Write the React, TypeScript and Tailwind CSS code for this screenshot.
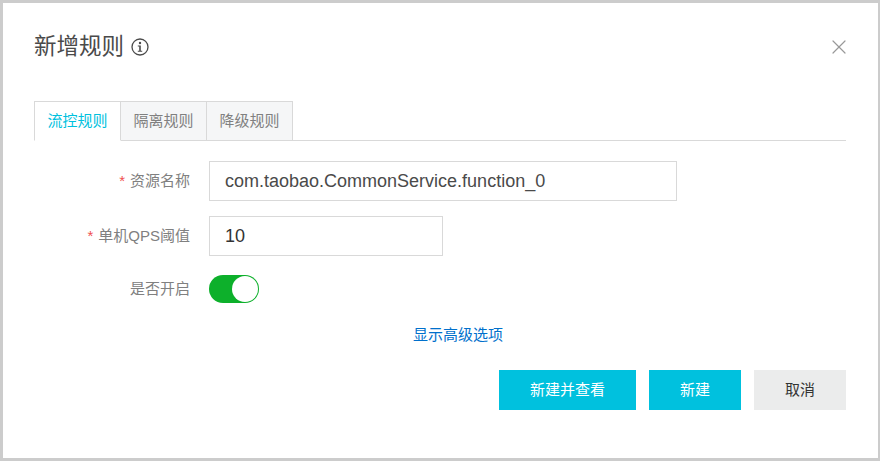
import { X } from 'lucide-react';

const font = "font-['Liberation_Sans','Noto_Sans_CJK_SC',sans-serif]";

const tabs = ['流控规则', '隔离规则', '降级规则'];

function Label({ text, required }: { text: string; required?: boolean }) {
  return (
    <div className="flex w-[156px] items-center justify-end text-[15px] text-[#808080]">
      {required && <span className="mr-[5px] text-[15px] text-[#f04f4f]">*</span>}
      {text}
    </div>
  );
}

export default function App() {
  return (
    <div className={`h-[461px] w-[880px] overflow-hidden bg-[#cccccc] pt-[3px] pl-[3px] ${font}`}>
      <div className="h-[455px] w-[875px] bg-white pt-[27px] pl-[31px]">
        {/* header */}
        <div className="flex h-[34px] w-[813px] items-center justify-between">
          <div className="flex items-center text-[22.5px] text-[#4a4a4a]">
            <span>新增规则</span>
            <svg viewBox="0 0 18 18" className="ml-[7px] h-[18px] w-[18px] text-[#4a4a4a]" fill="none">
              <circle cx="9" cy="9" r="8" stroke="currentColor" strokeWidth="1.3" />
              <circle cx="9" cy="5" r="1.2" fill="currentColor" />
              <path d="M6.8 7.6H9.8V12.7H11.2V13.7H6.8V12.7H8.2V8.6H6.8Z" fill="currentColor" />
            </svg>
          </div>
          <X size={24} strokeWidth={1.2} className="mr-[-4px] text-[#999999]" />
        </div>

        {/* tabs */}
        <div className="mt-[37px] flex h-[40px] w-[812px] border-b border-[#d9d9d9]">
          {tabs.map((tab, i) => (
            <div
              key={tab}
              className={
                i === 0
                  ? 'mb-[-1px] flex h-[40px] w-[87px] items-center justify-center border border-[#d9d9d9] border-b-white bg-white text-[15px] text-[#00c1de]'
                  : 'flex h-[39px] w-[86px] items-center justify-center border-t border-r border-[#d9d9d9] bg-[#f5f6f7] text-[15px] text-[#808080]'
              }
            >
              {tab}
            </div>
          ))}
        </div>

        {/* form */}
        <div className="mt-[20px] flex h-[40px]">
          <Label text="资源名称" required />
          <div className="ml-[19px] flex h-[40px] w-[468px] items-center border border-[#d9d9d9] pl-[15px] text-[18px] text-[#4a4a4a]">
            com.taobao.CommonService.function_0
          </div>
        </div>
        <div className="mt-[15px] flex h-[40px]">
          <Label text="单机QPS阈值" required />
          <div className="ml-[19px] flex h-[40px] w-[234px] items-center border border-[#d9d9d9] pl-[15px] text-[18px] text-[#333333]">
            10
          </div>
        </div>
        <div className="mt-[19px] flex h-[28px] items-center">
          <Label text="是否开启" />
          <div className="ml-[19px] flex h-[28px] w-[50px] items-center justify-end rounded-full bg-[#0db02b] pr-[1px]">
            <div className="h-[26px] w-[26px] rounded-full bg-white" />
          </div>
        </div>

        {/* advanced */}
        <div className="mt-[22px] flex h-[20px] w-[812px] justify-center pl-[36px] text-[15px] leading-[20px] text-[#0070cc]">
          显示高级选项
        </div>

        {/* actions */}
        <div className="mt-[25px] flex w-[812px] justify-end gap-[13px] text-[15px]">
          <button className="h-[40px] w-[137px] bg-[#00c1de] text-white">新建并查看</button>
          <button className="h-[40px] w-[92px] bg-[#00c1de] text-white">新建</button>
          <button className="h-[40px] w-[92px] bg-[#ebecec] text-[#333333]">取消</button>
        </div>
      </div>
    </div>
  );
}
